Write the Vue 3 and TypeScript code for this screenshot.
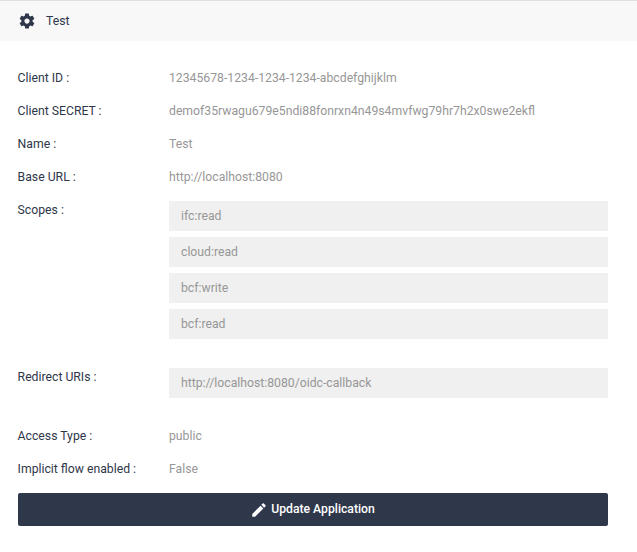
<script setup lang="ts">
interface Field {
  label: string
  value: string | string[]
}

const title = 'Test'

const fields: Field[] = [
  { label: 'Client ID', value: '12345678-1234-1234-1234-abcdefghijklm' },
  { label: 'Client SECRET', value: 'demof35rwagu679e5ndi88fonrxn4n49s4mvfwg79hr7h2x0swe2ekfl' },
  { label: 'Name', value: 'Test' },
  { label: 'Base URL', value: 'http://localhost:8080' },
  { label: 'Scopes', value: ['ifc:read', 'cloud:read', 'bcf:write', 'bcf:read'] },
  { label: 'Redirect URIs', value: ['http://localhost:8080/oidc-callback'] },
  { label: 'Access Type', value: 'public' },
  { label: 'Implicit flow enabled', value: 'False' },
]
</script>

<template>
  <section class="card">
    <header class="card-header">
      <svg class="gear" viewBox="0 0 24 24" aria-hidden="true">
        <path d="M19.43 12.98c.04-.32.07-.64.07-.98s-.03-.66-.07-.98l2.11-1.65c.19-.15.24-.42.12-.64l-2-3.46c-.12-.22-.39-.3-.61-.22l-2.49 1c-.52-.4-1.08-.73-1.69-.98l-.38-2.65C14.46 2.18 14.25 2 14 2h-4c-.25 0-.46.18-.49.42l-.38 2.65c-.61.25-1.17.59-1.69.98l-2.49-1c-.23-.09-.49 0-.61.22l-2 3.46c-.13.22-.07.49.12.64l2.11 1.65c-.04.32-.07.65-.07.98s.03.66.07.98l-2.11 1.65c-.19.15-.24.42-.12.64l2 3.46c.12.22.39.3.61.22l2.49-1c.52.4 1.08.73 1.69.98l.38 2.65c.03.24.24.42.49.42h4c.25 0 .46-.18.49-.42l.38-2.65c.61-.25 1.17-.59 1.69-.98l2.49 1c.23.09.49 0 .61-.22l2-3.46c.12-.22.07-.49-.12-.64l-2.11-1.65zM12 15.5c-1.93 0-3.5-1.57-3.5-3.5s1.57-3.5 3.5-3.5 3.5 1.57 3.5 3.5-1.57 3.5-3.5 3.5z" />
      </svg>
      <span>{{ title }}</span>
    </header>
    <div class="card-body">
      <dl class="fields">
        <div v-for="field in fields" :key="field.label" class="field">
          <dt>{{ field.label }} :</dt>
          <dd v-if="typeof field.value === 'string'">{{ field.value }}</dd>
          <dd v-else class="list">
            <span v-for="item in field.value" :key="item" class="item">{{ item }}</span>
          </dd>
        </div>
      </dl>
      <button class="update" type="button">
        <svg class="pencil" viewBox="0 0 24 24" aria-hidden="true">
          <path d="M3 17.25V21h3.75L17.81 9.94l-3.75-3.75L3 17.25zM20.71 7.04c.39-.39.39-1.02 0-1.41l-2.34-2.34c-.39-.39-1.02-.39-1.41 0l-1.83 1.83 3.75 3.75 1.83-1.83z" />
        </svg>
        <span class="update-label">Update Application</span>
      </button>
    </div>
  </section>
</template>

<style>
body {
  background: #fff;
}
</style>

<style scoped>
.card {
  font-family: Roboto, "Liberation Sans", sans-serif;
  font-size: 12.22px;
  line-height: 18px;
  color: #2f374a;
}

.card-header {
  display: flex;
  align-items: center;
  gap: 10px;
  box-sizing: border-box;
  height: 41px;
  padding: 0 18px;
  border-top: 1px solid #e0e0e0;
  background: #f8f8f8;
}

.gear {
  width: 18px;
  height: 18px;
  fill: #2f374a;
}

.card-body {
  padding: 28px 29px 26px 18px;
}

.fields {
  display: flex;
  flex-direction: column;
  gap: 15px;
  margin: 0;
}

.field {
  display: grid;
  grid-template-columns: 151px 1fr;
}

dt {
  margin-left: -0.4px;
}

dd {
  margin: 0;
  color: #979797;
}

.list {
  display: flex;
  flex-direction: column;
  gap: 6px;
  padding-bottom: 14px;
}

.item {
  padding: 6px 12px;
  background: #f0f0f0;
}

.update {
  display: flex;
  align-items: center;
  justify-content: center;
  gap: 3px;
  width: 100%;
  height: 33px;
  margin-top: 15px;
  padding: 0 1px 0 0;
  border: 0;
  border-radius: 2px;
  background: #2f374a;
  color: #fff;
  font: 500 12.2px/18px Roboto, "Liberation Sans", sans-serif;
}

.update-label {
  padding-bottom: 2px;
}

.pencil {
  width: 18px;
  height: 18px;
  fill: #fff;
}
</style>
